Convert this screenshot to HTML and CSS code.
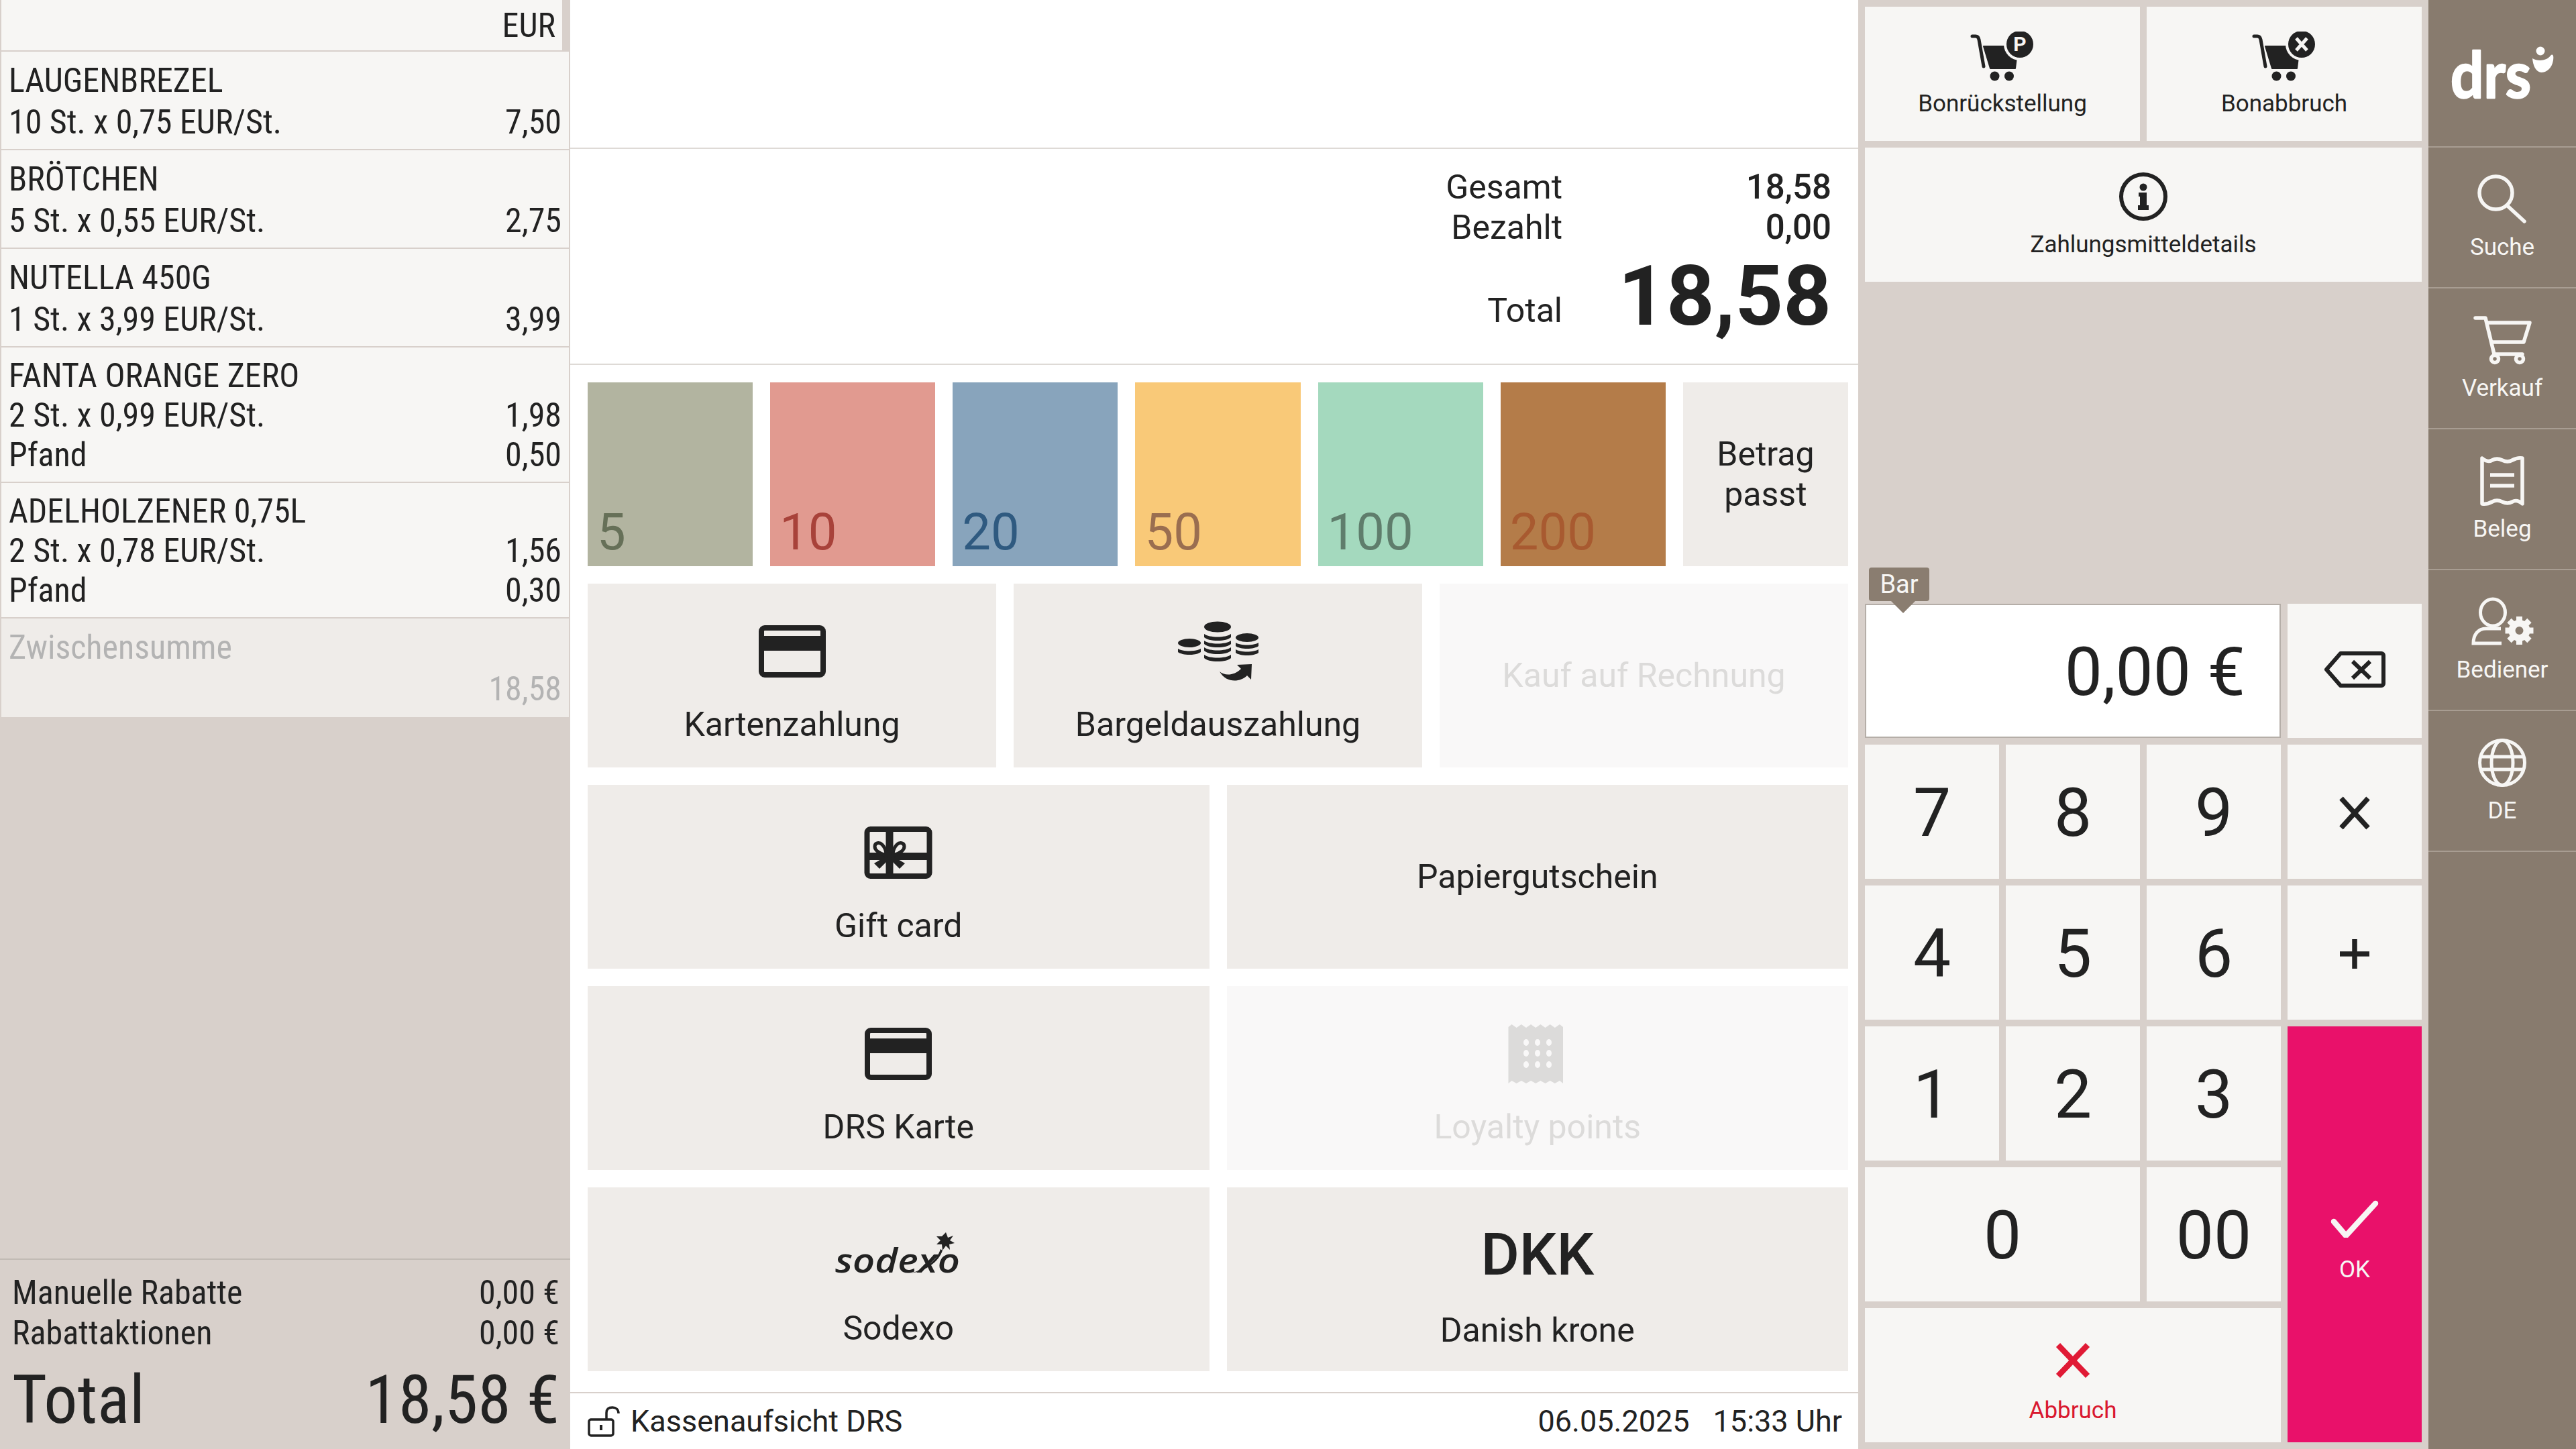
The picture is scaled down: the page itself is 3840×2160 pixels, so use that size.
FILE: index.html
```html
<!DOCTYPE html>
<html lang="de">
<head>
<meta charset="utf-8">
<title>Kasse</title>
<link rel="stylesheet" href="styles.css">
</head>
<body>
<div class="app">
  <section class="receipt">
    <div class="rhead"><span class="rhead-text">EUR</span><span class="thumb"></span></div>
    <div class="item"><div class="ln">LAUGENBREZEL</div><div class="ln"><span>10 St. x 0,75 EUR/St.</span><span>7,50</span></div></div>
    <div class="item"><div class="ln">BRÖTCHEN</div><div class="ln"><span>5 St. x 0,55 EUR/St.</span><span>2,75</span></div></div>
    <div class="item"><div class="ln">NUTELLA 450G</div><div class="ln"><span>1 St. x 3,99 EUR/St.</span><span>3,99</span></div></div>
    <div class="item three"><div class="ln">FANTA ORANGE ZERO</div><div class="ln"><span>2 St. x 0,99 EUR/St.</span><span>1,98</span></div><div class="ln"><span>Pfand</span><span>0,50</span></div></div>
    <div class="item three"><div class="ln">ADELHOLZENER 0,75L</div><div class="ln"><span>2 St. x 0,78 EUR/St.</span><span>1,56</span></div><div class="ln"><span>Pfand</span><span>0,30</span></div></div>
    <div class="item sub"><div class="ln">Zwischensumme</div><div class="ln"><span></span><span>18,58</span></div></div>
    <div class="summary">
      <div class="ln"><span>Manuelle Rabatte</span><span>0,00 €</span></div>
      <div class="ln"><span>Rabattaktionen</span><span>0,00 €</span></div>
      <div class="ln grand"><span>Total</span><span>18,58 €</span></div>
    </div>
  </section>

  <main class="pay">
    <div class="blank"></div>
    <div class="totals">
      <div class="tgrid">
        <span class="tl">Gesamt</span><span class="tv">18,58</span>
        <span class="tl">Bezahlt</span><span class="tv">0,00</span>
        <span class="tl tl-big">Total</span><span class="tv tv-big">18,58</span>
      </div>
    </div>
    <div class="tenders">
      <div class="notes">
        <div class="note n5">5</div>
        <div class="note n10">10</div>
        <div class="note n20">20</div>
        <div class="note n50">50</div>
        <div class="note n100">100</div>
        <div class="note n200">200</div>
        <div class="btn plain fit">Betrag<br>passt</div>
      </div>
      <div class="row3">
        <div class="btn">
          <div class="ico"><svg width="120" height="100" viewBox="0 0 120 100"><rect x="14" y="16" width="92" height="70" rx="5" fill="none" stroke="#222" stroke-width="8"/><rect x="14" y="28" width="92" height="22" fill="#222"/></svg></div>
          <div class="lbl">Kartenzahlung</div>
        </div>
        <div class="btn">
          <div class="ico"><svg width="120" height="100" viewBox="0 0 120 100" fill="#222">
            <ellipse cx="59" cy="14.500" rx="20" ry="8"/>
            <path id="s1" d="M39 25c4 3 12 4.500 20 4.500s16-1.500 20-4.500v5c-3 3-11 5-20 5s-17-2-20-5z"/>
            <use href="#s1" y="10"/><use href="#s1" y="20"/><use href="#s1" y="31"/>
            <ellipse cx="17" cy="38.500" rx="17" ry="6.500"/>
            <path d="M0 47c3 2 10 3.500 17 3.500s14-1.500 17-3.500v5c-3 2.500-10 4-17 4s-14-1.500-17-4z"/>
            <ellipse cx="103" cy="30.500" rx="17" ry="6.500"/>
            <path id="s2" d="M86 38c3 2 10 3.500 17 3.500s14-1.500 17-3.500v5c-3 2.500-10 4-17 4s-14-1.500-17-4z"/>
            <use href="#s2" y="10"/>
            <path d="M62 81C70 88 84 87 94 77L88 71L110 70L109 93L103 87C93 97 72 99 62 81Z"/>
          </svg></div>
          <div class="lbl">Bargeldauszahlung</div>
        </div>
        <div class="btn off mid">Kauf auf Rechnung</div>
      </div>
      <div class="row2">
        <div class="btn">
          <div class="ico"><svg width="120" height="100" viewBox="0 0 120 100" fill="none" stroke="#222"><rect x="13.500" y="16" width="93" height="70" rx="5" stroke-width="8"/><path d="M47 14V86" stroke-width="11"/><path d="M13 56.500H107" stroke-width="11"/><path d="M42 55C32 52 25 48 25 42C25 36 32 35 36 39C40 43 42 50 42 55ZM52 55C62 52 69 48 69 42C69 36 62 35 58 39C54 43 52 50 52 55Z" stroke-width="5"/><path d="M41 57L24 67L32 75L45 62ZM53 57L70 67L62 75L49 62Z" fill="#222" stroke="none"/></svg></div>
          <div class="lbl">Gift card</div>
        </div>
        <div class="btn mid">Papiergutschein</div>
        <div class="btn">
          <div class="ico"><svg width="120" height="100" viewBox="0 0 120 100"><rect x="14" y="16" width="92" height="70" rx="5" fill="none" stroke="#222" stroke-width="8"/><rect x="14" y="28" width="92" height="22" fill="#222"/></svg></div>
          <div class="lbl">DRS Karte</div>
        </div>
        <div class="btn off">
          <div class="ico"><svg width="120" height="100" viewBox="0 0 120 100"><path d="M21.500 7l7.150 5 7.150-5 7.150 5 7.150-5 7.150 5 7.150-5 7.150 5 7.150-5 7.150 5 7.150-5 5 4V95l-5-4-7.150 4-7.150-4-7.150 4-7.150-4-7.150 4-7.150-4-7.150 4-7.150-4-7.150 4-7.150-4-5 4V11z" fill="#dcdbda"/><g fill="#f9f8f8"><ellipse cx="43" cy="34" rx="4" ry="5"/><ellipse cx="60" cy="34" rx="4" ry="5"/><ellipse cx="77" cy="34" rx="4" ry="5"/><ellipse cx="43" cy="50" rx="4" ry="5"/><ellipse cx="60" cy="50" rx="4" ry="5"/><ellipse cx="77" cy="50" rx="4" ry="5"/><ellipse cx="43" cy="67" rx="4" ry="5"/><ellipse cx="60" cy="67" rx="4" ry="5"/><ellipse cx="77" cy="67" rx="4" ry="5"/></g></svg></div>
          <div class="lbl">Loyalty points</div>
        </div>
        <div class="btn">
          <div class="ico"><svg width="200" height="100" viewBox="0 0 200 100"><text x="6" y="77" class="sodexo" textLength="186" lengthAdjust="spacingAndGlyphs">sodexo</text><path d="M171 18l3 8 8-3-5 7 7 4-8 2 1 8-6-6-5 7-1-9-8 0 6-6-6-6 8 0z" transform="translate(0 -1)" fill="#222"/><path d="M163 42C158 58 142 72 118 78C140 75 160 62 166 44Z" fill="#222"/></svg></div>
          <div class="lbl">Sodexo</div>
        </div>
        <div class="btn">
          <div class="ico"><span class="cur">DKK</span></div>
          <div class="lbl lbl-cur">Danish krone</div>
        </div>
      </div>
    </div>
    <footer class="foot">
      <div class="who">
        <svg class="lock" width="48" height="46" viewBox="0 0 48 46" fill="none" stroke="#222" stroke-width="3.500"><rect x="2" y="20" width="36" height="24" rx="3"/><path d="M20 28v8" stroke-width="4"/><path d="M28 19V10C28 4 32 2 37 2S46 5 46 11"/></svg>
        <span>Kassenaufsicht DRS</span>
      </div>
      <div class="when"><span>06.05.2025</span><span>15:33 Uhr</span></div>
    </footer>
  </main>

  <section class="side">
    <div class="actions">
      <div class="key act">
        <svg class="aico" width="100" height="80" viewBox="0 0 100 80"><path d="M5 7H10Q14 7 15 12L22 52" fill="none" stroke="#222" stroke-width="5" stroke-linecap="round"/><path d="M22 22H73L69 55H32Z" fill="#222" stroke="#222" stroke-width="2" stroke-linejoin="round"/><circle cx="38.500" cy="66.500" r="7" fill="#222"/><circle cx="60" cy="66.500" r="7" fill="#222"/><circle cx="76" cy="19" r="24" fill="#f7f6f4"/><circle cx="76" cy="19" r="20" fill="#222"/><text x="76" y="29" class="pglyph">P</text></svg>
        <span class="alab">Bonrückstellung</span>
      </div>
      <div class="key act">
        <svg class="aico" width="100" height="80" viewBox="0 0 100 80"><path d="M5 7H10Q14 7 15 12L22 52" fill="none" stroke="#222" stroke-width="5" stroke-linecap="round"/><path d="M22 22H73L69 55H32Z" fill="#222" stroke="#222" stroke-width="2" stroke-linejoin="round"/><circle cx="38.500" cy="66.500" r="7" fill="#222"/><circle cx="60" cy="66.500" r="7" fill="#222"/><circle cx="76" cy="19" r="24" fill="#f7f6f4"/><circle cx="76" cy="19" r="20" fill="#222"/><path d="M68 10L84 28M84 10L68 28" stroke="#f7f6f4" stroke-width="5"/></svg>
        <span class="alab">Bonabbruch</span>
      </div>
      <div class="key act wide">
        <svg class="aico" width="100" height="80" viewBox="0 0 100 80"><circle cx="50" cy="36" r="33" fill="none" stroke="#222" stroke-width="6"/><circle cx="50" cy="22" r="5.500" fill="#222"/><path d="M43 30H55V49H58V56H42V49H45V36H43Z" fill="#222"/></svg>
        <span class="alab">Zahlungsmitteldetails</span>
      </div>
    </div>
    <div class="pad">
      <div class="amount">0,00 €<div class="tip">Bar</div></div>
      <div class="key"><svg class="bksp" width="100" height="70" viewBox="0 0 100 70" fill="none" stroke="#222" stroke-width="6" stroke-linejoin="round"><path d="M29 11H90A3 3 0 0 1 93 14V56A3 3 0 0 1 90 59H29L8 35Z"/><path d="M47 23L73 48M73 23L47 48"/></svg></div>
      <div class="key">7</div><div class="key">8</div><div class="key">9</div>
      <div class="key"><svg width="50" height="50" viewBox="0 0 50 50" stroke="#222" stroke-width="7.500"><path d="M5 3L45 47M45 3L5 47"/></svg></div>
      <div class="key">4</div><div class="key">5</div><div class="key">6</div>
      <div class="key"><svg width="50" height="50" viewBox="0 0 50 50" stroke="#222" stroke-width="7.500"><path d="M25 3V47M3 25H47"/></svg></div>
      <div class="key">1</div><div class="key">2</div><div class="key">3</div>
      <div class="key ok"><svg width="80" height="60" viewBox="0 0 80 60" fill="none" stroke="#f7f6f4" stroke-width="8.500" stroke-linecap="round"><path d="M9 36L27 57L71 9"/></svg><span class="oklab">OK</span></div>
      <div class="key span2">0</div><div class="key">00</div>
      <div class="key span3 cancel"><svg width="60" height="56" viewBox="0 0 60 56" stroke="#e01a35" stroke-width="8.500"><path d="M8 5L52 51M52 5L8 51"/></svg><span class="calab">Abbruch</span></div>
    </div>
  </section>

  <nav class="rail">
    <div class="nav logo"><svg width="220" height="218" viewBox="0 0 220 218"><text x="33" y="146" class="drs" textLength="120" lengthAdjust="spacingAndGlyphs">drs</text><circle cx="167" cy="76" r="6.500" fill="#fff"/><path d="M155 87C162 91 175 92 182 83C186 79 187 84 186 90C184 102 176 108 168 108C160 107 156 98 155 87Z" fill="#fff"/></svg></div>
    <div class="nav"><svg width="100" height="90" viewBox="0 0 100 90" fill="none" stroke="#f7f6f4" stroke-width="5.500" stroke-linecap="round"><circle cx="40.500" cy="37.500" r="24.500"/><path d="M58 57L83 80"/></svg><span>Suche</span></div>
    <div class="nav"><svg width="100" height="90" viewBox="0 0 100 90" fill="none" stroke="#f7f6f4" stroke-width="5.500" stroke-linecap="round" stroke-linejoin="round"><path d="M10 14H25L38 68H80"/><path d="M28 21H91L82 50H35"/><circle cx="39" cy="75" r="5.500"/><circle cx="76" cy="75" r="5.500"/></svg><span>Verkauf</span></div>
    <div class="nav"><svg width="100" height="90" viewBox="0 0 100 90" fill="none" stroke="#f7f6f4" stroke-width="5.500" stroke-linejoin="round"><path d="M20 13Q28 20 35 16T50 16T65 16T80 13V81Q72 74 65 78T50 78T35 78T20 81Z"/><path d="M32 38H68M32 54H68"/></svg><span>Beleg</span></div>
    <div class="nav"><svg width="100" height="90" viewBox="0 0 100 90" fill="none" stroke="#f7f6f4" stroke-width="5"><ellipse cx="36" cy="33" rx="18.500" ry="20"/><path d="M48 57H26C14 57 7 66 7 79H49"/><circle cx="75.500" cy="60" r="11" stroke-width="10"/><path d="M75.500 39V46M75.500 74V81M54.500 60H61.500M89.500 60H96.500M65.500 50L60.500 45M85.500 70L90.500 75M85.500 50L90.500 45M65.500 70L60.500 75" stroke-width="9"/></svg><span>Bediener</span></div>
    <div class="nav"><svg width="100" height="90" viewBox="0 0 100 90" fill="none" stroke="#f7f6f4" stroke-width="5"><circle cx="50" cy="47" r="33.500"/><ellipse cx="50" cy="47" rx="16" ry="33.500"/><path d="M19 38H81M19 57H81"/></svg><span>DE</span></div>
  </nav>
</div>
</body>
</html>
```
FILE: styles.css
```css
* { box-sizing: border-box; }
html, body { margin: 0; padding: 0; }
body { width: 3840px; height: 2160px; overflow: hidden; font-family: Roboto, "Liberation Sans", sans-serif; color: #222; background: #d8d0cb; }
.app { display: grid; grid-template-columns: 850px 1920px 850px 220px; height: 2160px; }

/* receipt */
.receipt { display: flex; flex-direction: column; padding: 0 2px; background: #d8d0cb; font-size: 50px; line-height: 60px; font-stretch: 75%; }
.rhead { display: flex; justify-content: flex-end; height: 77px; border-bottom: 2px solid #d8d0cb; background: #f7f6f4; }
.rhead-text { padding: 8px 10px 0 0; }
.thumb { width: 10px; background: #d8d0cb; }
.item { padding: 13px 11px 10px 11px; border-bottom: 2px solid #d8d0cb; background: #f7f6f4; }
.item > .ln:first-child { height: 62px; }
.item.three { padding: 12px 11px 11px; }
.item.three > .ln { height: 59px; }
.item.sub { border-bottom: 0; background: #efece9; color: #b3b3b3; height: 147px; }
.ln { display: flex; justify-content: space-between; height: 60px; white-space: nowrap; }
.summary { margin: auto -2px 0 -2px; padding: 19px 16px 13px 18px; border-top: 2px solid #c2bbb5; }
.grand { height: 120px; margin-top: 10px; font-size: 100px; line-height: 120px; }

/* payment column */
.pay { display: flex; flex-direction: column; background: #fff; }
.blank { height: 222px; border-bottom: 2px solid #dedad6; }
.totals { height: 322px; padding: 27px 40px 0 0; border-bottom: 2px solid #dedad6; }
.tgrid { display: grid; grid-template-columns: max-content 401px; justify-content: end; align-items: baseline; font-size: 50px; line-height: 60px; }
.tl { text-align: right; }
.tv { text-align: right; font-weight: 500; font-size: 51px; }
.tl-big { align-self: start; margin-top: 64px; }
.tv-big { align-self: start; margin-top: 13px; font-size: 125px; line-height: 120px; font-weight: 700; }

.tenders { display: flex; flex-direction: column; gap: 26px; padding: 26px 15px 0 26px; }
.notes { display: grid; grid-template-columns: repeat(7, 1fr); gap: 26px; height: 274px; }
.note { display: flex; align-items: flex-end; padding: 0 0 13px 14px; font-size: 76px; line-height: 76px; }
.n5 { background: #b2b4a0; color: #667058; }
.n10 { background: #e19a90; color: #a8423a; }
.n20 { background: #88a4bc; color: #2f5a80; }
.n50 { background: #f9c978; color: #9a6e50; }
.n100 { background: #a4d9be; color: #5f7d6c; }
.n200 { background: #b47c49; color: #a85a30; }

.row3 { display: grid; grid-template-columns: repeat(3, 1fr); gap: 26px; height: 274px; }
.row2 { display: grid; grid-template-columns: repeat(2, 1fr); grid-auto-rows: 274px; gap: 26px; }
.btn { display: flex; flex-direction: column; align-items: center; padding-top: 50px; background: #efece9; font-size: 50px; line-height: 60px; text-align: center; white-space: nowrap; }
.btn.mid, .btn.fit { justify-content: center; padding-top: 0; }
.btn.off { background: #f9f8f8; color: #dcdbda; }
.ico { display: flex; justify-content: center; align-items: flex-start; width: 120px; height: 100px; }
.ico svg { flex: none; display: block; }
.lbl { margin-top: 30px; }
.lbl-cur { margin-top: 33px; }
.cur { font-size: 88px; line-height: 100px; font-weight: 500; }
.sodexo { font-family: "Open Sans", sans-serif; font-style: italic; font-weight: 600; font-size: 50px; fill: #222; }

.foot { display: flex; justify-content: space-between; align-items: center; height: 85px; margin-top: 31px; padding: 0 24px 0 26px; border-top: 2px solid #d8d0cb; font-size: 45px; line-height: 60px; }
.who { display: flex; align-items: center; gap: 16px; }
.when { display: flex; gap: 35px; }
.lock { display: block; }

/* right panel */
.side { display: flex; flex-direction: column; justify-content: space-between; padding: 10px; background: #d8d0cb; }
.actions { display: grid; grid-template-columns: 1fr 1fr; grid-auto-rows: 200px; gap: 10px; }
.key { display: flex; flex-direction: column; align-items: center; justify-content: center; padding-top: 4px; background: #f7f6f4; font-size: 100px; line-height: 100px; }
.act { justify-content: flex-start; padding-top: 37px; }
.wide { grid-column: span 2; }
.aico { display: block; }
.alab { margin-top: 8px; font-size: 35px; line-height: 40px; }
.pglyph { font-size: 30px; font-weight: 700; fill: #f7f6f4; text-anchor: middle; }
.bksp { margin-bottom: 8px; }

.pad { display: grid; grid-template-columns: repeat(4, 200px); grid-auto-rows: 200px; gap: 10px; }
.amount { position: relative; grid-column: span 3; display: flex; align-items: center; justify-content: flex-end; padding: 4px 51px 0 0; border: 2px solid #b5aea8; background: #fff; font-size: 100px; line-height: 100px; }
.tip { position: absolute; left: 4px; top: -56px; width: 90px; height: 50px; border-radius: 4px; background: #8a7d70; color: #f7f6f4; font-size: 38px; line-height: 50px; text-align: center; }
.tip::after { content: ""; position: absolute; left: 33px; top: 50px; border: solid transparent; border-width: 18px 18px 0; border-top-color: #8a7d70; }
.span2 { grid-column: span 2; }
.span3 { grid-column: span 3; }
.ok { grid-row: span 3; padding-top: 17px; background: #e9116a; }
.oklab { margin-top: 28px; color: #f7f6f4; font-size: 35px; line-height: 40px; }
.cancel { justify-content: flex-start; padding-top: 50px; }
.calab { margin-top: 27px; color: #d9182f; font-size: 35px; line-height: 40px; }

/* nav rail */
.rail { display: flex; flex-direction: column; background: #887b6e; }
.nav { display: flex; flex-direction: column; align-items: center; height: 210px; padding-top: 30px; border-bottom: 2px solid #a89d92; color: #f7f6f4; font-size: 35px; line-height: 40px; }
.nav svg { display: block; }
.nav span { margin-top: 9px; }
.nav.logo { height: 220px; padding-top: 0; }
.drs { font-family: Lato, sans-serif; font-weight: 700; font-size: 96px; fill: #fff; stroke: #fff; stroke-width: 2.5px; stroke-linejoin: round; }
```
